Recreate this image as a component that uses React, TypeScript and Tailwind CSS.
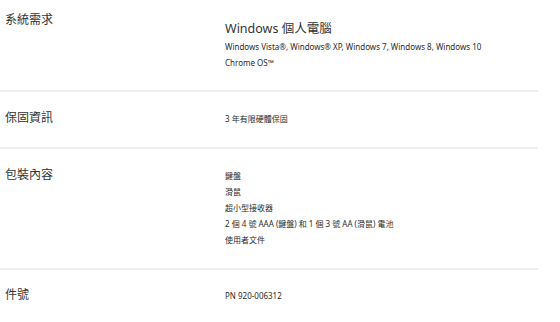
import React from 'react';

const font = { fontFamily: '"Noto Sans", "Noto Sans CJK TC", sans-serif' };

function Row({
  label,
  height,
  pt,
  contentPt,
  children,
  last,
}: {
  label: string;
  height: string;
  pt: string;
  contentPt: string;
  children: React.ReactNode;
  last?: boolean;
}) {
  return (
    <div
      className={`flex w-[538px] ${height} ${last ? '' : 'border-b-2 border-[#eeeeee]'}`}
    >
      <div className={`w-[225px] shrink-0 pl-[5px] ${pt} text-[12px] leading-[16px] text-[#333333]`}>
        {label}
      </div>
      <div className={`flex flex-col ${contentPt} text-[8px] leading-[16px] text-[#2b2b2b]`}>
        {children}
      </div>
    </div>
  );
}

export default function App() {
  return (
    <div className="w-[560px] h-[322px] overflow-hidden bg-white" style={font}>
      <div className="flex w-[538px] h-[92px] border-b-2 border-[#eeeeee]">
        <div className="w-[225px] shrink-0 pl-[5px] pt-[12px] text-[12px] leading-[16px] text-[#333333]">
          系統需求
        </div>
        <div className="flex flex-col pt-[21px] text-[#2b2b2b]">
          <p className="text-[12.5px] leading-[16px] mb-[2px] text-[#333333]">Windows 個人電腦</p>
          <p className="text-[8px] leading-[16px]">
            Windows Vista®, Windows® XP, Windows 7, Windows 8, Windows 10
          </p>
          <p className="text-[8px] leading-[16px]">Chrome OS™</p>
        </div>
      </div>

      <Row label="保固資訊" height="h-[57px]" pt="pt-[18px]" contentPt="pt-[19px]">
        <p>3 年有限硬體保固</p>
      </Row>

      <Row label="包裝內容" height="h-[121px]" pt="pt-[18px]" contentPt="pt-[19px]">
        <p>鍵盤</p>
        <p>滑鼠</p>
        <p>超小型接收器</p>
        <p>2 個 4 號 AAA (鍵盤) 和 1 個 3 號 AA (滑鼠) 電池</p>
        <p>使用者文件</p>
      </Row>

      <Row label="件號" height="h-[52px]" pt="pt-[17px]" contentPt="pt-[18px]" last>
        <p>PN 920-006312</p>
      </Row>
    </div>
  );
}
